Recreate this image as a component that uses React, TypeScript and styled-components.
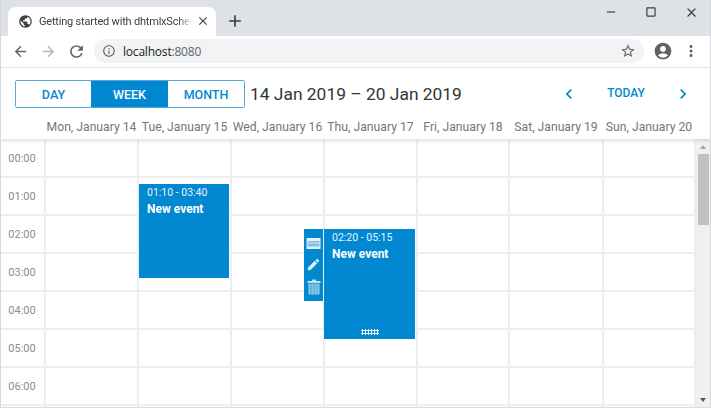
import React from "react";
import styled, { createGlobalStyle } from "styled-components";
import {
  MdAccountCircle, MdAdd, MdArrowBack, MdArrowForward, MdChevronLeft, MdChevronRight,
  MdClose, MdCropSquare, MdEdit, MdInfoOutline, MdMoreVert, MdPublic,
  MdRefresh, MdRemove, MdStarBorder,
} from "react-icons/md";

const Global = createGlobalStyle`
  html, body { margin: 0; padding: 0; background: #fff; }
  body { font-family: Roboto, "Liberation Sans", sans-serif; }
  * { box-sizing: border-box; }
`;

const COLUMNS = "45px 93px 93px 93px 93px 92px 94px 92px";

const Page = styled.div`
  width: 711px; height: 408px; overflow: hidden; display: flex; flex-direction: column;
  background: #fff; border-left: 1px solid #d5d7da; border-right: 1px solid #d5d7da;
`;
const TitleBar = styled.div`
  height: 36px; flex: none; background: #dee1e6; display: flex; align-items: flex-end; padding-left: 7px;
`;
const Tab = styled.div`
  width: 208px; height: 29px; background: #fff; border-radius: 8px 8px 0 0;
  display: flex; align-items: center; padding: 0 6px 1px 10px; color: #3c4043;
`;
const TabTitle = styled.span`
  flex: 1; margin-left: 6px; font: 11px Roboto, sans-serif; letter-spacing: -0.2px; white-space: nowrap; overflow: hidden;
  -webkit-mask-image: linear-gradient(90deg, #000 88%, transparent 98%);
  mask-image: linear-gradient(90deg, #000 88%, transparent 98%);
`;
const NewTab = styled.div`
  width: 20px; height: 20px; margin: 0 0 5px 9px; color: #3c4043; display: flex; align-items: center; justify-content: center;
`;
const WindowControls = styled.div`
  margin-left: auto; margin-right: -1px; align-self: flex-start; display: flex; color: #3c4043;
`;
const WindowButton = styled.div`
  width: 40px; height: 24px; display: flex; align-items: center; justify-content: center;
`;
const Toolbar = styled.div`
  height: 32px; flex: none; background: #fff; border-bottom: 1px solid #e2e3e5;
  display: flex; align-items: center; padding: 0 0 1px 8px;
`;
const NavIcon = styled.div<{ $dim?: boolean }>`
  width: 28px; height: 24px; display: flex; align-items: center; justify-content: center; margin-left: -3px; margin-right: 3px;
  color: ${(p) => (p.$dim ? "#b4b6b9" : "#5f6368")};
`;
const Omnibox = styled.div`
  width: 550px; height: 24px; margin-left: 1px; border-radius: 12px; background: #f1f3f4;
  display: flex; align-items: center; padding: 0 8px 0 8px; color: #5f6368;
`;
const Url = styled.span`
  margin-left: 7px; font: 12px "Open Sans", Roboto, sans-serif; letter-spacing: -0.2px; color: #5f6368;
  b { font-weight: 400; color: #202124; }
`;
const OmniEnd = styled.div`
  margin-left: auto; display: flex;
`;
const ToolEnd = styled.div`
  display: flex; align-items: center; margin-left: 9px; gap: 9px; color: #5f6368;
`;
const Navline = styled.div`
  height: 50px; flex: none; display: flex; align-items: center; padding: 2px 0 0 14px;
`;
const Segment = styled.div`
  display: grid; grid-template-columns: 75px 77px 76px; width: 230px; height: 28px; border: 1px solid #5aa9dd; border-radius: 2px; overflow: hidden;
`;
const SegButton = styled.div<{ $active?: boolean }>`
  display: flex; align-items: center; justify-content: center;
  font-size: 12.5px; font-weight: 500;
  color: ${(p) => (p.$active ? "#fff" : "#0288d1")};
  background: ${(p) => (p.$active ? "#0288d1" : "#fff")};
`;
const DateTitle = styled.div`
  margin-left: 5px; font-size: 17.4px; font-weight: 400; color: #333; white-space: nowrap;
`;
const Pager = styled.div`
  margin-left: auto; width: 134px; margin-right: 17px; display: flex; align-items: center; justify-content: space-between; color: #0288d1;
`;
const Today = styled.span`
  font-size: 12px; font-weight: 500; margin-bottom: 2px;
`;
const DayHeader = styled.div`
  height: 21px; flex: none; display: grid; grid-template-columns: ${COLUMNS};
  position: relative; z-index: 2; box-shadow: 0 2px 3px rgba(0,0,0,0.12); background: #fff;
`;
const DayName = styled.div`
  text-align: center; font-size: 12.2px; color: #767676; white-space: nowrap; line-height: 21px; margin-top: -1px; padding-right: 2px;
`;
const Body = styled.div`
  flex: 1; min-height: 0; display: flex; border-bottom: 1px solid #dcdcdc;
`;
const Grid = styled.div`
  position: relative; width: 695px; flex: none; overflow: hidden; padding-top: 1px;
`;
const Row = styled.div`
  height: 38px; display: grid; grid-template-columns: ${COLUMNS};
  border-bottom: 2px solid #eeeeee;
`;
const TimeCell = styled.div`
  text-align: center; font-size: 11px; color: #8c8c8c; padding-top: 12px; padding-right: 1px; border-right: 2px solid #eeeeee;
`;
const DayCell = styled.div`
  border-right: 2px solid #eeeeee;
`;
const EventBox = styled.div<{ $left: number; $top: number; $w: number; $h: number }>`
  position: absolute; left: ${(p) => p.$left}px; top: ${(p) => p.$top}px; width: ${(p) => p.$w}px; height: ${(p) => p.$h}px;
  background: #0288d1; color: #fff; padding: 2px 8px;
`;
const EventTime = styled.div`
  font-size: 10.5px; line-height: 14px; color: #e8f4fb;
`;
const EventTitle = styled.div`
  font-size: 12px; font-weight: 700; line-height: 16px; margin-top: 1px;
`;
const Handle = styled.div`
  position: absolute; left: 37px; bottom: 4px; width: 18px; height: 6px;
  background-image: radial-gradient(circle, #e3f2fb 1px, transparent 1.2px);
  background-size: 3px 3px;
`;
const ActionBar = styled.div`
  position: absolute; left: 303px; top: 90px; width: 19px; height: 72px; background: #0288d1; color: #e3f2fb;
  display: flex; flex-direction: column; align-items: center; padding-top: 8px; gap: 7px;
`;
const Scrollbar = styled.div`
  width: 14px; flex: none; background: #f0f0f0; position: relative;
`;
const Thumb = styled.div`
  position: absolute; top: 15px; left: 2px; width: 11px; height: 71px; background: #c1c1c1;
`;
const Arrow = styled.div<{ $down?: boolean }>`
  position: absolute; left: 4px; ${(p) => (p.$down ? "bottom: 5px;" : "top: 6px;")}
  width: 0; height: 0; border-left: 3.5px solid transparent; border-right: 3.5px solid transparent;
  ${(p) => (p.$down ? "border-top: 4px solid #555;" : "border-bottom: 4px solid #a3a3a3;")}
`;

const days = ["Mon, January 14", "Tue, January 15", "Wed, January 16", "Thu, January 17", "Fri, January 18", "Sat, January 19", "Sun, January 20"];
const hours = ["00:00", "01:00", "02:00", "03:00", "04:00", "05:00", "06:00", ""];

const DetailsIcon = () => (
  <svg width="15" height="13" viewBox="0 0 15 13" fill="none">
    <rect x="0.5" y="1" width="14" height="11" fill="#e3f2fb" />
    <rect x="1.5" y="4" width="12" height="5.5" fill="#7fc1e6" />
    <rect x="1.5" y="5.6" width="12" height="0.8" fill="#e3f2fb" />
  </svg>
);

const TrashIcon = () => (
  <svg width="14" height="16" viewBox="0 0 14 16" fill="none">
    <rect x="5" y="0.5" width="4" height="1.5" fill="#b9def3" />
    <rect x="0.5" y="2" width="13" height="1.8" fill="#cfe8f6" />
    <path d="M1.5 4.5h11V15.5h-11z" fill="#8cc8ea" />
    <path d="M4 5v10M7 5v10M10 5v10" stroke="#0288d1" strokeWidth="1" opacity="0.55" />
  </svg>
);

export default function App() {
  return (
    <>
      <Global />
      <Page>
        <TitleBar>
          <Tab>
            <MdPublic size={15} />
            <TabTitle>Getting started with dhtmlxSchec</TabTitle>
            <MdClose size={14} />
          </Tab>
          <NewTab><MdAdd size={20} /></NewTab>
          <WindowControls>
            <WindowButton><MdRemove size={14} /></WindowButton>
            <WindowButton><MdCropSquare size={14} /></WindowButton>
            <WindowButton><MdClose size={15} /></WindowButton>
          </WindowControls>
        </TitleBar>
        <Toolbar>
          <NavIcon><MdArrowBack size={17} /></NavIcon>
          <NavIcon $dim><MdArrowForward size={17} /></NavIcon>
          <NavIcon><MdRefresh size={19} /></NavIcon>
          <Omnibox>
            <MdInfoOutline size={14} />
            <Url><b>localhost</b>:8080</Url>
            <OmniEnd><MdStarBorder size={16} /></OmniEnd>
          </Omnibox>
          <ToolEnd>
            <MdAccountCircle size={20} />
            <MdMoreVert size={18} />
          </ToolEnd>
        </Toolbar>
        <Navline>
          <Segment>
            <SegButton>DAY</SegButton>
            <SegButton $active>WEEK</SegButton>
            <SegButton>MONTH</SegButton>
          </Segment>
          <DateTitle>14 Jan 2019 – 20 Jan 2019</DateTitle>
          <Pager>
            <MdChevronLeft size={20} />
            <Today>TODAY</Today>
            <MdChevronRight size={20} />
          </Pager>
        </Navline>
        <DayHeader>
          <div />
          {days.map((d) => <DayName key={d}>{d}</DayName>)}
        </DayHeader>
        <Body>
          <Grid>
            {hours.map((h, i) => (
              <Row key={i}>
                <TimeCell>{h}</TimeCell>
                {days.map((d) => <DayCell key={d} />)}
              </Row>
            ))}
            <EventBox $left={138} $top={45} $w={90} $h={94}>
              <EventTime>01:10 - 03:40</EventTime>
              <EventTitle>New event</EventTitle>
            </EventBox>
            <ActionBar>
              <DetailsIcon />
              <MdEdit size={15} />
              <TrashIcon />
            </ActionBar>
            <EventBox $left={323} $top={90} $w={91} $h={110}>
              <EventTime>02:20 - 05:15</EventTime>
              <EventTitle>New event</EventTitle>
              <Handle />
            </EventBox>
          </Grid>
          <Scrollbar>
            <Arrow />
            <Thumb />
            <Arrow $down />
          </Scrollbar>
        </Body>
      </Page>
    </>
  );
}
